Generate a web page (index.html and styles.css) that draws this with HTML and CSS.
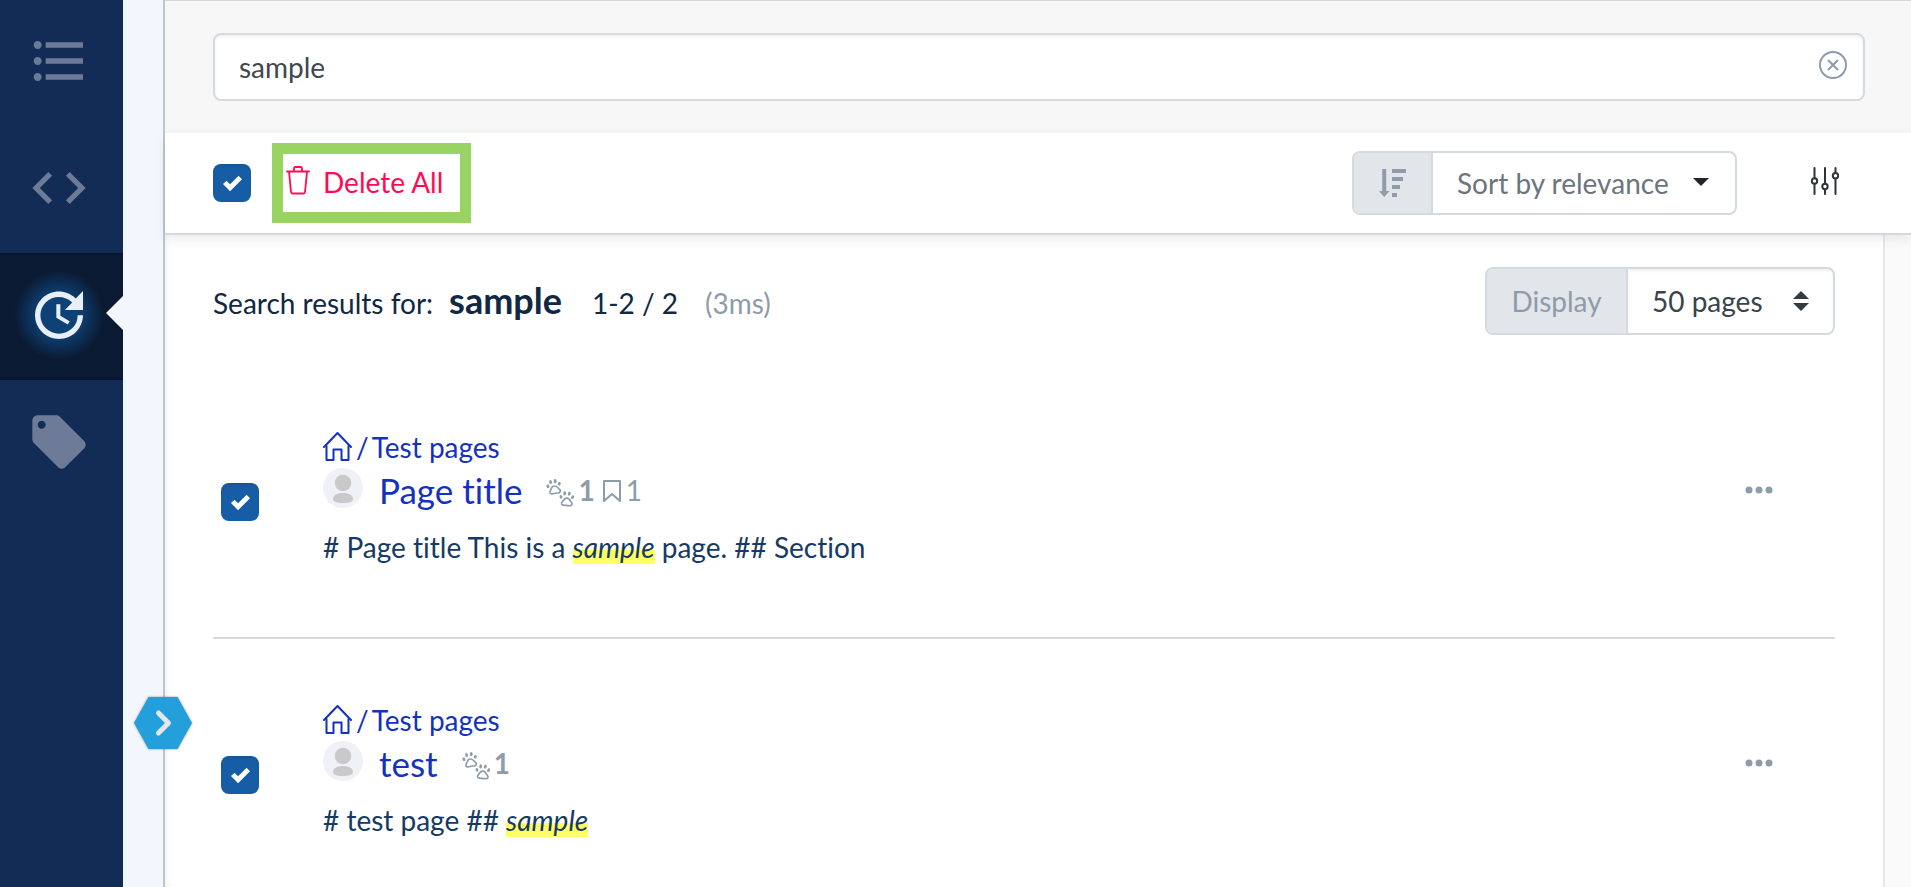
FILE: index.html
```html
<!DOCTYPE html>
<html lang="en">
<head>
<meta charset="utf-8">
<title>Search results</title>
<link rel="stylesheet" href="styles.css">
</head>
<body>
<svg class="defs" aria-hidden="true">
  <symbol id="i-check" viewBox="0 0 8 8"><path fill="#fff" d="M6.564.75l-3.59 3.612-1.538-1.55L0 4.26 2.974 7.25 8 2.193z"/></symbol>
  <symbol id="i-home" viewBox="0 0 30 30"><g fill="none" stroke="currentColor" stroke-width="2" stroke-linecap="round" stroke-linejoin="round"><path d="M1 16 14.500 2 28 16"/><path d="M3.500 15v14h7V18.500h8V29h7V15"/></g></symbol>
  <symbol id="i-user" viewBox="0 0 40 40"><circle cx="20" cy="20" r="20" fill="#f0f1f6"/><circle cx="20" cy="15" r="8.300" fill="#c9c9c9"/><path fill="#c9c9c9" d="M10 31c0-4 4.500-6 10-6s10 2 10 6c0 2.600-4 4-10 4s-10-1.400-10-4z"/></symbol>
  <symbol id="i-paws" viewBox="0 0 28 28">
    <g id="paw"><path fill="none" stroke="currentColor" stroke-width="1.700" d="M8.500 7c2.500 0 3 1.800 4.700 3 1.800 1.200 1.500 3.400-.6 3.800-1.800.3-2.600.2-4.300.7-1.800.5-3.300.9-4.100-.4-.8-1.500.4-2.700 1-4.300C5.800 8 6.700 7 8.500 7z"/><g fill="currentColor"><ellipse cx="1.900" cy="7.300" rx="1.400" ry="1.900" transform="rotate(-20 1.900 7.300)"/><ellipse cx="4.600" cy="3" rx="1.400" ry="2.100" transform="rotate(-10 4.600 3)"/><ellipse cx="9.200" cy="2.200" rx="1.400" ry="2.100"/><ellipse cx="13.300" cy="4.800" rx="1.400" ry="1.900" transform="rotate(20 13.300 4.800)"/></g></g>
    <use href="#paw" transform="translate(13 11.800) rotate(14 7 7)"/>
  </symbol>
  <symbol id="i-more" viewBox="0 0 28 8"><g fill="#8e9baa"><circle cx="4" cy="4" r="3.500"/><circle cx="14" cy="4" r="3.500"/><circle cx="24" cy="4" r="3.500"/></g></symbol>
</svg>
<div class="app">
  <nav class="sidebar" aria-label="Sidebar">
    <a class="nav-item" href="#toc" aria-label="Contents"><svg viewBox="0 0 24 24"><path d="M4 10.5c-.83 0-1.500.67-1.500 1.500s.67 1.500 1.500 1.500 1.500-.67 1.500-1.500-.67-1.500-1.500-1.500zm0-6c-.83 0-1.500.67-1.500 1.500S3.170 7.500 4 7.500 5.500 6.830 5.500 6 4.830 4.500 4 4.500zm0 12c-.83 0-1.500.68-1.500 1.500s.68 1.500 1.500 1.500 1.500-.68 1.500-1.500-.67-1.500-1.500-1.500zM7 19h14v-2H7v2zm0-6h14v-2H7v2zm0-8v2h14V5H7z"/></svg></a>
    <a class="nav-item" href="#custom" aria-label="Custom sidebar"><svg viewBox="0 0 24 24"><path d="M9.400 16.600L4.800 12l4.600-4.600L8 6l-6 6 6 6 1.400-1.400zm5.200 0l4.600-4.600-4.600-4.600L16 6l6 6-6 6-1.400-1.400z"/></svg></a>
    <a class="nav-item active" href="#recent" aria-label="Recent changes"><svg viewBox="0 0 24 24"><path d="M21 10.120h-6.780l2.740-2.820c-2.730-2.700-7.150-2.800-9.880-.1-2.730 2.710-2.730 7.080 0 9.790s7.150 2.710 9.880 0C18.320 15.650 19 14.080 19 12.100h2c0 1.980-.88 4.550-2.640 6.290-3.510 3.480-9.210 3.480-12.720 0-3.500-3.470-3.530-9.110-.02-12.580s9.140-3.470 12.650 0L21 3v7.120zM12.500 8v4.250l3.500 2.080-.72 1.210L11 13V8h1.500z"/></svg></a>
    <a class="nav-item" href="#tags" aria-label="Tags"><svg viewBox="0 0 24 24"><path d="M21.410 11.580l-9-9C12.050 2.220 11.550 2 11 2H4c-1.100 0-2 .9-2 2v7c0 .55.22 1.050.59 1.420l9 9c.36.36.86.58 1.410.58.55 0 1.050-.22 1.410-.59l7-7c.37-.36.59-.86.59-1.410 0-.55-.23-1.060-.59-1.420zM5.500 7C4.670 7 4 6.330 4 5.500S4.670 4 5.500 4 7 4.670 7 5.500 6.330 7 5.500 7z"/></svg></a>
  </nav>
  <div class="drawer">
    <button class="drawer-toggle" aria-label="Open sidebar"><svg viewBox="0 0 58 52"><path fill="#239fdb" d="M14.500 0h29L58 26 43.500 52h-29L0 26z"/><path fill="none" stroke="#e4e7ea" stroke-width="5" stroke-linecap="round" stroke-linejoin="round" d="M24.500 16 34.500 26 24.500 36"/></svg></button>
  </div>
  <main class="main">
    <form class="search-bar">
      <div class="search-box">
        <input class="search-input" type="text" value="sample" aria-label="Search">
        <button class="clear" type="button" aria-label="Clear"><svg viewBox="0 0 28 28"><g fill="none" stroke="#8e9baa" stroke-width="2" stroke-linecap="round"><circle cx="14" cy="14" r="13"/><path d="M9.500 9.500l9 9M18.500 9.500l-9 9"/></g></svg></button>
      </div>
    </form>
    <div class="toolbar">
      <label class="check"><input type="checkbox" checked aria-label="Select all"><svg><use href="#i-check"/></svg></label>
      <button class="delete-all"><svg viewBox="0 0 24 30"><g fill="none" stroke="currentColor" stroke-width="1.800" stroke-linejoin="round" stroke-linecap="round"><path d="M1 6.500h22M8 6V3.500C8 2.500 8.600 2 9.500 2h5c.9 0 1.500.5 1.500 1.500V6M3 6.500l2 20.500c.1 1 .7 1.500 1.700 1.500h10.600c1 0 1.600-.5 1.700-1.500l2-20.500"/></g></svg><span>Delete All</span></button>
      <div class="group sort">
        <span class="addon"><svg viewBox="0 0 28 28"><g fill="#8e9baa"><path d="M3.200 0h4v22h3.300L5.200 28 0 22h3.200zM13 0h14v4H13zM13 8h11v4H13zM13 16h8v4h-8zM13 24h5v4h-5z"/></g></svg></span>
        <div class="field"><select aria-label="Sort"><option>Sort by relevance</option></select><svg class="caret" viewBox="0 0 16 8"><path fill="#212529" d="M0 0h16L8 8z"/></svg></div>
      </div>
      <button class="options" aria-label="Search options"><svg viewBox="0 0 28 28"><g fill="none" stroke="#2f3439" stroke-width="2" stroke-linecap="round"><path d="M3.500 1v10M3.500 17v10M14 1v15.500M14 22.500V27M24.500 1v4.500M24.500 12v15"/><circle cx="3.500" cy="14" r="2.700"/><circle cx="14" cy="19.500" r="2.700"/><circle cx="24.500" cy="8.700" r="2.700"/></g></svg></button>
    </div>
    <div class="body">
      <section class="results">
        <header class="summary">
          <div class="found">
            <span>Search results for:</span>
            <strong>sample</strong>
            <span class="count">1-2 / 2</span>
            <span class="time">(3ms)</span>
          </div>
          <div class="group display">
            <label class="addon" for="per-page">Display</label>
            <div class="field"><select id="per-page"><option>50 pages</option></select><svg class="updown" viewBox="0 0 16 20"><path fill="#343a40" d="M8 0l8 8H0zM0 12h16l-8 8z"/></svg></div>
          </div>
        </header>
        <ul class="list">
          <li class="item">
            <label class="check"><input type="checkbox" checked aria-label="Select Page title"><svg><use href="#i-check"/></svg></label>
            <div class="entry">
              <div class="crumbs"><a href="#home" aria-label="Home"><svg><use href="#i-home"/></svg></a><span>/</span><a href="#test-pages">Test pages</a></div>
              <div class="title"><svg class="avatar"><use href="#i-user"/></svg><a href="#page-title">Page title</a><span class="meta"><svg class="paws"><use href="#i-paws"/></svg><b>1</b><svg class="bookmark" viewBox="0 0 20 24"><path fill="none" stroke="currentColor" stroke-width="2" stroke-linejoin="round" d="M2 2h16v20l-8-7-8 7z"/></svg><span>1</span></span></div>
              <p class="excerpt"># Page title This is a <em>sample</em> page. ## Section</p>
            </div>
            <button class="more" aria-label="More"><svg><use href="#i-more"/></svg></button>
          </li>
          <li class="item">
            <label class="check"><input type="checkbox" checked aria-label="Select test"><svg><use href="#i-check"/></svg></label>
            <div class="entry">
              <div class="crumbs"><a href="#home" aria-label="Home"><svg><use href="#i-home"/></svg></a><span>/</span><a href="#test-pages">Test pages</a></div>
              <div class="title"><svg class="avatar"><use href="#i-user"/></svg><a href="#test">test</a><span class="meta"><svg class="paws"><use href="#i-paws"/></svg><b>1</b></span></div>
              <p class="excerpt"># test page ## <em>sample</em></p>
            </div>
            <button class="more" aria-label="More"><svg><use href="#i-more"/></svg></button>
          </li>
        </ul>
      </section>
      <aside class="gutter"></aside>
    </div>
  </main>
</div>
</body>
</html>
```
FILE: styles.css
```css
* { box-sizing: border-box; }
body {
  margin: 0;
  font: 28px/42px Lato, "Liberation Sans", sans-serif;
  font-variant-ligatures: no-common-ligatures;
  color: #112744;
  background: #fff;
}
a { color: #1432bd; text-decoration: none; }
button { margin: 0; padding: 0; border: 0; background: none; font: inherit; color: inherit; }
svg { display: block; flex: none; }
.defs { position: absolute; width: 0; height: 0; }

.app { display: flex; height: 100vh; overflow: hidden; }

.sidebar { flex: none; width: 123px; background: #132c55; }
.nav-item {
  position: relative;
  display: flex;
  height: 127px;
  padding: 30px 32px 0 27px;
}
.nav-item:first-child { margin-top: -1px; }
.nav-item svg { width: 64px; height: 64px; fill: #6d7b99; }
.nav-item.active { background: #0b1a33; box-shadow: inset 0 2px #08152b, inset 0 -2px #08152b; }
.nav-item.active::before {
  content: "";
  position: absolute;
  left: 14px;
  top: 17px;
  width: 90px;
  height: 90px;
  border-radius: 50%;
  background: radial-gradient(closest-side, #0d4277 40%, #0d3a69 55%, #0b1a3300);
}
.nav-item.active svg { position: relative; fill: #e9effa; }
.nav-item.active::after {
  content: "";
  position: absolute;
  right: 0;
  top: 43px;
  width: 17px;
  height: 34px;
  background: #f3f6fc;
  clip-path: polygon(100% 0, 0 50%, 100% 100%);
}

.drawer { position: relative; flex: none; width: 42px; background: #f3f6fc; border-right: 2px solid #c0c4cb; }
.drawer-toggle { position: absolute; z-index: 2; left: 11px; top: 697px; filter: drop-shadow(0 0 1px #0006); }
.drawer-toggle svg { width: 58px; height: 52px; }

.main { flex: 1; min-width: 0; display: flex; flex-direction: column; }
.search-bar { padding: 32px 46px 32px 48px; background: #f7f7f7; border-top: 1px solid #d3d7dc; }
.search-box { position: relative; display: flex; }
.search-input {
  flex: 1;
  min-width: 0;
  height: 68px;
  padding: 0 64px 0 24px;
  border: 2px solid #d5dadf;
  border-radius: 8px;
  background: #fff;
  box-shadow: inset 0 2px 3px #0000000f;
  font: inherit;
  color: #3f474f;
}
.clear { position: absolute; right: 18px; top: 18px; }
.clear svg { width: 28px; height: 28px; }

.toolbar {
  position: relative;
  z-index: 1;
  display: flex;
  align-items: center;
  height: 102px;
  padding: 0 72px 0 48px;
  background: #fff;
  border-bottom: 2px solid #d5d9df;
  box-shadow: 0 4px 12px #00000014;
}
.check { display: grid; place-items: center; flex: none; }
.check > * { grid-area: 1 / 1; }
.check input {
  appearance: none;
  width: 38px;
  height: 38px;
  margin: 0;
  border-radius: 8px;
  background: #165da5;
  box-shadow: inset 0 2px 2px #00000014;
}
.check svg { width: 19px; height: 19px; pointer-events: none; }

.delete-all {
  display: flex;
  gap: 13px;
  height: 80px;
  margin-left: 21px;
  padding: 7px 17px 0 3px;
  border: 11px solid #99d462;
  color: #ff0a54;
}
.delete-all svg { width: 24px; height: 30px; margin-top: 4px; }

.group { display: flex; border: 2px solid #d5dadf; border-radius: 8px; background: #fff; overflow: hidden; }
.addon { display: flex; align-items: center; justify-content: center; background: #e2e6ea; border-right: 2px solid #d5dadf; color: #8e9baa; }
.field { position: relative; flex: 1; display: flex; }
.field select {
  appearance: none;
  flex: 1;
  padding: 0 0 0 24px;
  border: 0;
  background: transparent;
  font: inherit;
  color: #3a424a;
}
.field svg { position: absolute; pointer-events: none; }
.sort { width: 385px; height: 64px; margin-left: auto; }
.sort .addon { width: 79px; }
.sort .addon svg { width: 28px; height: 28px; }
.sort select { color: #6c757d; }
.caret { right: 26px; top: 25px; width: 16px; height: 8px; }
.options { margin-left: 74px; padding-bottom: 4px; }
.options svg { width: 28px; height: 28px; }

.body { flex: 1; display: flex; min-height: 0; }
.results { flex: 1; min-width: 0; padding: 32px 48px 0; box-shadow: inset 4px 0 6px -3px #00000014; }
.gutter { width: 28px; background: #fafafa; border-left: 2px solid #e6e8eb; }
.summary { display: flex; align-items: center; height: 68px; }
.found { display: flex; align-items: baseline; }
.found strong { margin-left: 16px; font-size: 36px; }
.count { margin-left: 30px; }
.time { margin-left: 27px; color: #8e9baa; }
.display { width: 350px; height: 68px; margin-left: auto; }
.display .addon { width: 141px; }
.display .field { box-shadow: inset 0 2px 3px #0000000f; }
.updown { right: 24px; top: 22px; width: 16px; height: 20px; }

.list { margin: 31px 0 0; padding: 0; list-style: none; }
.item { display: flex; align-items: flex-start; padding: 60px 62px 69px 8px; border-bottom: 2px solid #d5dadf; }
.item:last-child { border-bottom: 0; }
.item .check { margin-top: 57px; }
.entry { flex: 1; min-width: 0; margin-left: 64px; }
.crumbs { display: flex; gap: 3px; color: #1432bd; }
.crumbs svg { width: 30px; height: 30px; margin-top: 5px; }
.title { display: flex; height: 44px; line-height: 44px; font-size: 35px; }
.avatar { width: 40px; height: 40px; margin-right: 16px; }
.meta { display: flex; margin-left: 24px; font-size: 28px; color: #8e9baa; }
.paws { width: 28px; height: 28px; margin: 11px 4px 0 0; }
.bookmark { width: 20px; height: 24px; margin: 11px 4px 0 7px; }
.excerpt { margin: 14px 0 0; color: #163a63; }
.excerpt em { background: linear-gradient(transparent 60%, #ffff66 60%); }
.more { height: 44px; margin-top: 42px; }
.more svg { width: 28px; height: 8px; }
```
